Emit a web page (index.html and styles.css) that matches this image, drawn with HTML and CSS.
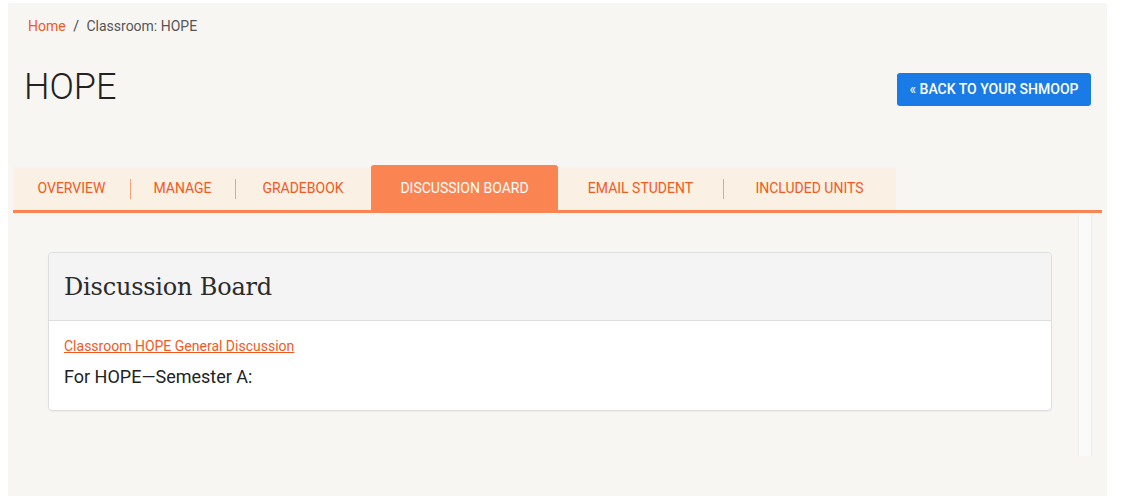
FILE: index.html
```html
<!DOCTYPE html>
<html lang="en">
<head>
    <meta charset="UTF-8">
    <title>Classroom: HOPE</title>
    <link rel="stylesheet" href="styles.css">
</head>
<body>
    <div class="page">
        <nav class="crumbs">
            <a href="#">Home</a>
            <span class="crumb-sep">/</span>
            <span>Classroom: HOPE</span>
        </nav>

        <div class="title-row">
            <h1>HOPE</h1>
            <a class="btn-back" href="#"><span class="laquo">&laquo;</span> BACK TO YOUR SHMOOP</a>
        </div>

        <ul class="tabs">
            <li class="tab tab-first"><a href="#">Overview</a></li>
            <li class="tab sep"><a href="#">Manage</a></li>
            <li class="tab sep"><a href="#">Gradebook</a></li>
            <li class="tab active"><a href="#">Discussion Board</a></li>
            <li class="tab"><a href="#">Email Student</a></li>
            <li class="tab sep tab-last"><a href="#">Included Units</a></li>
        </ul>

        <div class="content">
            <div class="main">
                <section class="card">
                    <div class="card-head">
                        <h2>Discussion Board</h2>
                    </div>
                    <div class="card-body">
                        <a class="topic" href="#">Classroom HOPE General Discussion</a>
                        <p>For HOPE&mdash;Semester A:</p>
                    </div>
                </section>
            </div>
            <div class="side"></div>
        </div>
    </div>
</body>
</html>
```

FILE: styles.css
```css
* {
    margin: 0;
    padding: 0;
    box-sizing: border-box;
}
body {
    background: #fff;
    font-family: Roboto, "Liberation Sans", sans-serif;
    color: #222;
}
a {
    text-decoration: none;
}
.page {
    margin: 3px 0 0 8px;
    width: 1099px;
    height: 493px;
    background: #f8f6f2;
}
/* breadcrumb */
.crumbs {
    padding: 13px 0 0 20px;
    font-size: 14px;
    line-height: 20px;
    color: #555;
}
.crumbs a {
    color: #f15a1f;
}
.crumb-sep {
    margin: 0 4px 0 4px;
    color: #444;
}
/* title + button */
.title-row {
    display: flex;
    justify-content: space-between;
    align-items: flex-start;
    padding: 28px 16px 0 16px;
}
.title-row h1 {
    font-size: 36px;
    font-weight: 300;
    line-height: 46px;
    color: #222;
}
.btn-back {
    margin-top: 9px;
    width: 194px;
    height: 33px;
    line-height: 33px;
    text-align: center;
    background: #1b7be6;
    color: #fff;
    border-radius: 3px;
    font-size: 14px;
    font-weight: 500;
}
.laquo {
    font-weight: 400;
}
/* tabs */
.tabs {
    list-style: none;
    display: flex;
    align-items: flex-end;
    margin: 55px 5px 0 5px;
    border-bottom: 3px solid #fa8552;
}
.tab {
    position: relative;
    height: 43px;
    background: #faf0e3;
    font-size: 14px;
    text-transform: uppercase;
    line-height: 43px;
    text-align: center;
}
.tab a {
    color: #f15a1f;
}
.tab.sep::before {
    content: '';
    position: absolute;
    left: 0;
    top: 12px;
    height: 20px;
    border-left: 1px solid #f4a27c;
}
.tab-first {
    width: 117px;
    border-top-left-radius: 3px;
}
.tab:nth-child(2) { width: 105px; }
.tab:nth-child(3) { width: 136px; }
.tab:nth-child(5) { width: 165px; }
.tab-last {
    width: 173px;
    border-top-right-radius: 3px;
}
.tab.active {
    width: 187px;
    height: 45px;
    line-height: 47px;
    background: #fa8552;
    border-radius: 3px 3px 0 0;
}
.tab.active a {
    color: #fff;
}
/* content */
.content {
    display: flex;
    margin: 0 5px;
}
.main {
    flex: 1;
    padding: 39px 26px 0 35px;
}
.side {
    width: 14px;
    height: 243px;
    margin-right: 10px;
    background: #fafafa;
    border-left: 1px solid #ececec;
    border-right: 1px solid #ececec;
}
.card {
    background: #fff;
    border: 1px solid #dedede;
    border-radius: 4px;
    box-shadow: 0 1px 1px rgba(0, 0, 0, 0.04);
}
.card-head {
    height: 68px;
    padding: 0 15px;
    background: #f4f4f4;
    border-bottom: 1px solid #dedede;
    border-radius: 4px 4px 0 0;
    display: flex;
    align-items: center;
}
.card-head h2 {
    font-family: "DejaVu Serif", "Liberation Serif", serif;
    font-weight: 400;
    font-size: 24px;
    color: #2b2b2b;
    letter-spacing: -0.2px;
}
.card-body {
    padding: 15px 15px 20px;
}
.topic {
    display: block;
    font-size: 14px;
    line-height: 20px;
    color: #f15a1f;
    text-decoration: underline;
}
.card-body p {
    margin-top: 8px;
    font-size: 18px;
    line-height: 26px;
    color: #222;
}
```
